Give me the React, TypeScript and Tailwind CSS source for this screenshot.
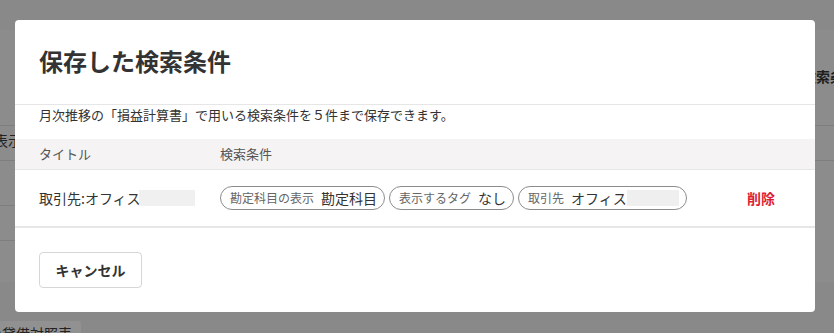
import React from "react";

const FONT = { fontFamily: '"Noto Sans CJK JP", "Noto Sans", sans-serif' };

function Chip({ label, value, redact }: { label: string; value: string; redact?: boolean }) {
  return (
    <div className="flex h-[24px] items-center gap-[7px] rounded-full border border-[#8c8c8c] pl-[9px] pr-[7px]">
      <span className="text-[12px] leading-[16px] text-[#666]">{label}</span>
      <span className="flex items-center text-[14px] leading-[18px] text-[#333]">
        {value}
        {redact && <span className="inline-block h-[16px] w-[52px] bg-[#efefef]" />}
      </span>
    </div>
  );
}

export default function App() {
  return (
    <div className="relative h-[333px] w-[834px] overflow-hidden bg-[#898989]" style={FONT}>
      {/* dimmed page underneath */}
      <div className="flex h-full flex-col">
        <div className="h-[30px] bg-[#898989]" />
        <div className="flex h-[252px] bg-[#8c8c8c]">
          <div className="flex w-[417px] flex-col">
            <div className="h-[95px]" />
            <div className="flex h-[35px] items-center border-t border-[#7e7e7e] pb-[6px]">
              <span className="-ml-[6px] text-[14px] leading-[18px] text-[#222]">表示</span>
            </div>
            <div className="h-[45px] border-t border-[#7e7e7e]" />
            <div className="h-[35px] border-t border-[#7e7e7e]" />
            <div className="flex-1 border-t border-[#7e7e7e]" />
          </div>
          <div className="flex flex-1 flex-col">
            <div className="flex h-[95px] items-center justify-end pb-[4px]">
              <span className="-mr-[24px] text-[14px] font-bold leading-[18px] text-[#1e1e1e]">検索条件</span>
            </div>
            <div className="h-[35px] border-t border-[#7e7e7e]" />
            <div className="flex-1 border-t border-[#7e7e7e]" />
          </div>
        </div>
        <div className="flex-1 bg-[#898989] pt-[39px]">
          <div className="flex h-[12px] w-[81px] items-start overflow-hidden rounded-tr-[3px] bg-[#919191]">
            <span className="-ml-[12px] mt-[3px] whitespace-nowrap text-[14px] leading-[18px] text-[#222]">の貸借対照表</span>
          </div>
        </div>
      </div>

      {/* modal */}
      <div className="absolute left-[15px] top-[20px] flex h-[292px] w-[800px] flex-col rounded-[4px] bg-white">
        <div className="flex h-[85px] items-center border-b border-[#e6e6e6] px-[24px] pb-[2px]">
          <h1 className="text-[24px] font-bold leading-[30px] text-[#333]">保存した検索条件</h1>
        </div>
        <div className="h-[34px] px-[24px]">
          <p className="text-[13px] leading-[20px] text-[#333]">月次推移の「損益計算書」で用いる検索条件を５件まで保存できます。</p>
        </div>
        <div className="flex h-[31px] items-center border-b border-[#e6e6e6] bg-[#f5f3f3] px-[24px] text-[13px] leading-[18px] text-[#555]">
          <div className="w-[181px]">タイトル</div>
          <div className="flex-1">検索条件</div>
          <div className="w-[60px]" />
        </div>
        <div className="flex h-[58px] items-center border-b-2 border-[#e6e6e6] px-[24px]">
          <div className="flex w-[181px] items-center text-[14px] leading-[18px] text-[#333]">
            取引先:オフィス
            <span className="-ml-[2px] inline-block h-[16px] w-[56px] bg-[#f0f0f0]" />
          </div>
          <div className="flex flex-1 items-center gap-[4px]">
            <Chip label="勘定科目の表示" value="勘定科目" />
            <Chip label="表示するタグ" value="なし" />
            <Chip label="取引先" value="オフィス" redact />
          </div>
          <div className="w-[60px] text-center text-[14px] font-bold leading-[18px] text-[#dc1f35]">削除</div>
        </div>
        <div className="px-[24px] pt-[24px]">
          <button className="h-[36px] w-[103px] rounded-[4px] border border-[#d6d6d6] bg-white text-[14px] font-bold text-[#333]">
            キャンセル
          </button>
        </div>
      </div>
    </div>
  );
}
